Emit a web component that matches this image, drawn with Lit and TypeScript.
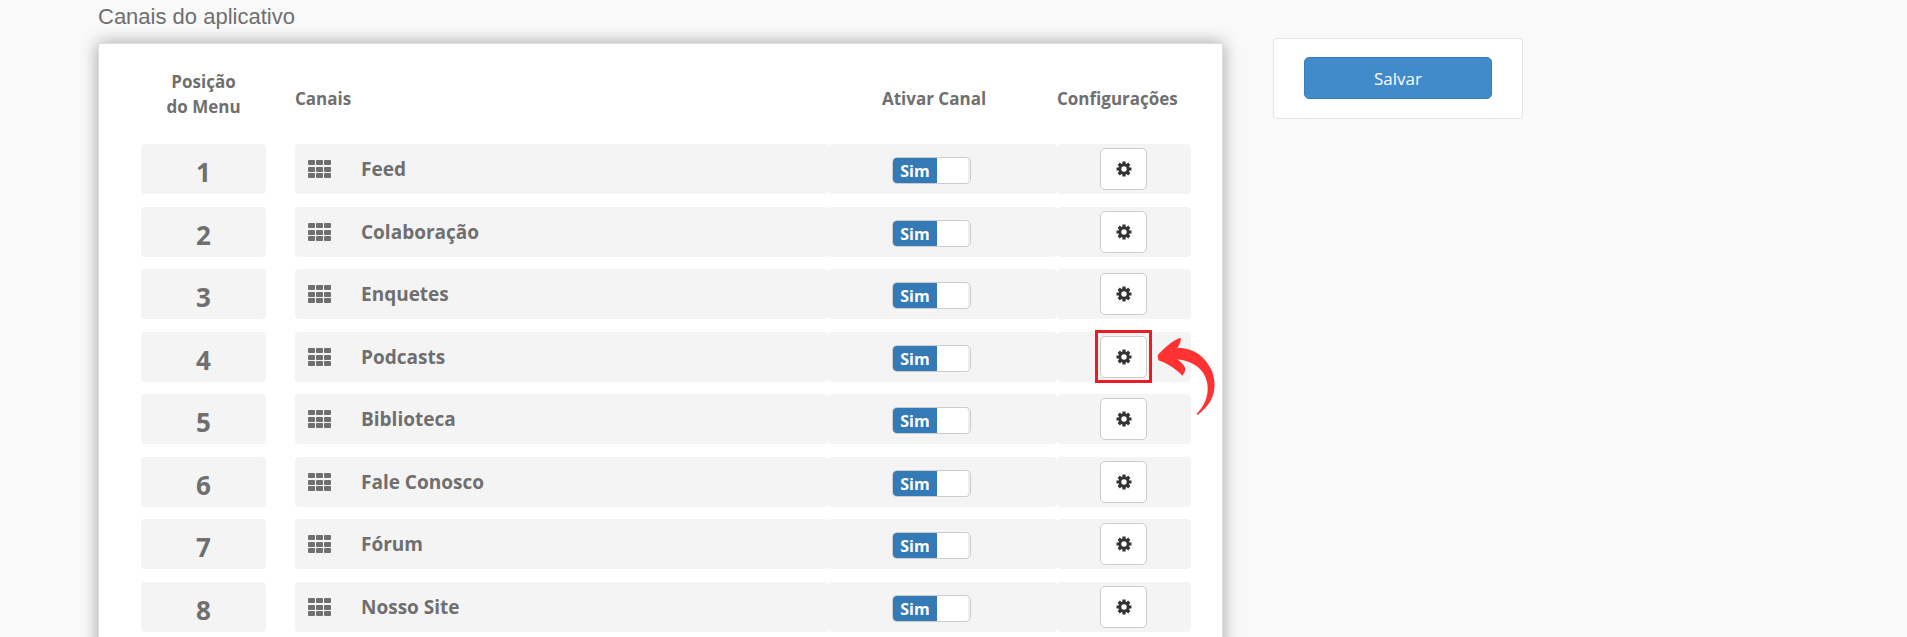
import { LitElement, html, css, svg, nothing } from "lit";
import { customElement, property, state } from "lit/decorators.js";

interface Channel {
  name: string;
  active: boolean;
}

const gridCells = [0, 8, 16].flatMap((x) =>
  [0, 7, 13].map((y) => svg`<rect x=${x} y=${y} width="7" height="5" rx="1"></rect>`)
);

@customElement("channel-switch")
export class ChannelSwitch extends LitElement {
  @property() name = "";
  @property({ type: Boolean }) checked = false;

  static styles = css`
    :host {
      display: block;
      width: 79px;
    }
    .switch {
      position: relative;
      display: flex;
      box-sizing: border-box;
      height: 27px;
      overflow: hidden;
      border: 1px solid #ccc;
      border-radius: 5px;
      background: #fff;
      cursor: pointer;
    }
    .input {
      position: absolute;
      inset: 0;
      width: 100%;
      height: 100%;
      margin: 0;
      opacity: 0;
      cursor: pointer;
    }
    .on {
      width: 44px;
      background: #337ab7;
      color: #fff;
      font-size: 16px;
      font-weight: 700;
      line-height: 26px;
      text-align: center;
    }
    .handle {
      width: 31px;
      border-right: 2px solid #eee;
      border-radius: 0 4px 4px 0;
    }
  `;

  render() {
    return html`
      <label class="switch">
        <input
          class="input"
          type="checkbox"
          aria-label="Ativar Canal ${this.name}"
          .checked=${this.checked}
          @change=${(e: Event) => (this.checked = (e.target as HTMLInputElement).checked)}
        />
        ${this.checked
          ? html`<span class="on">Sim</span><span class="handle"></span>`
          : html`<span class="handle"></span>`}
      </label>
    `;
  }
}

@customElement("app-root")
export class AppRoot extends LitElement {
  @state() private channels: Channel[] = [
    "Feed",
    "Colaboração",
    "Enquetes",
    "Podcasts",
    "Biblioteca",
    "Fale Conosco",
    "Fórum",
    "Nosso Site",
  ].map((name) => ({ name, active: true }));

  @state() private highlighted = "Podcasts";

  static styles = css`
    :host {
      display: block;
      min-height: 100vh;
      background: #f9f9f9;
      color: #6f6f6f;
      font-family: "Open Sans", sans-serif;
    }
    .page {
      display: grid;
      grid-template-columns: 9fr 2fr;
      gap: 50px;
      align-items: start;
      max-width: 1425px;
      margin-left: 98px;
    }
    .title {
      margin: 0;
      padding-top: 3px;
      height: 40px;
      font-family: "Liberation Sans", Arial, sans-serif;
      font-size: 22px;
      font-weight: 400;
      line-height: 28px;
    }
    .card {
      padding: 16px 31px 48px 42px;
      border: 1px solid #ddd;
      background: #fff;
      box-shadow: 0 0 16px rgba(0, 0, 0, 0.35);
    }
    .table {
      width: 100%;
      border-collapse: collapse;
      table-layout: fixed;
    }
    .col-position {
      width: 154px;
    }
    .col-active {
      width: 228px;
    }
    .col-config {
      width: 134px;
    }
    .head {
      box-sizing: border-box;
      height: 84px;
      padding: 26px 0 0;
      font-size: 17px;
      font-weight: 700;
      line-height: 25px;
      text-align: left;
      vertical-align: top;
    }
    .head-position {
      padding-top: 9px;
      padding-right: 29px;
      text-align: center;
    }
    .head-active {
      padding-left: 53px;
    }
    .cell {
      padding: 0 0 12px;
    }
    .row:nth-child(odd) .cell {
      padding-bottom: 13px;
    }
    .cell-position {
      padding-right: 29px;
    }
    .box {
      position: relative;
      display: flex;
      box-sizing: border-box;
      height: 50px;
      border-radius: 4px;
      background: #f4f4f4;
    }
    .box-position {
      justify-content: center;
      padding-top: 2px;
      font-size: 26px;
      font-weight: 700;
      line-height: 52px;
    }
    .box-channel {
      gap: 30px;
      padding-left: 13px;
      font-size: 19px;
      font-weight: 700;
      line-height: 50px;
    }
    .grid-icon {
      width: 23px;
      height: 18px;
      margin-top: 16px;
      fill: #6f6f6f;
    }
    .box-active {
      padding: 13px 0 0 63px;
    }
    .box-config {
      padding: 4px 0 0 43px;
    }
    .config {
      display: flex;
      align-items: center;
      justify-content: center;
      width: 47px;
      height: 42px;
      padding: 0;
      border: 1px solid #ccc;
      border-radius: 5px;
      background: #fff;
      cursor: pointer;
    }
    .gear {
      width: 16px;
      height: 16px;
      fill: #333;
    }
    .marker {
      position: absolute;
      top: -2px;
      left: 38px;
      box-sizing: border-box;
      width: 57px;
      height: 53px;
      border: 3px solid #ed1c24;
      pointer-events: none;
    }
    .arrow {
      position: absolute;
      z-index: 1;
      top: 5px;
      left: 100px;
      width: 58px;
      height: 80px;
      fill: #ff3131;
      pointer-events: none;
    }
    .side {
      margin-top: 38px;
      padding: 18px 30px 19px;
      border: 1px solid #e4e4e4;
      border-radius: 4px;
      background: #fff;
    }
    .save {
      width: 100%;
      height: 42px;
      border: 1px solid #357ebd;
      border-radius: 5px;
      background: #428bca;
      color: #fff;
      font-family: inherit;
      font-size: 17px;
      cursor: pointer;
    }
  `;

  private renderRow(channel: Channel, index: number) {
    return html`
      <tr class="row">
        <td class="cell cell-position"><div class="box box-position">${index + 1}</div></td>
        <td class="cell">
          <div class="box box-channel">
            <svg class="grid-icon" viewBox="0 0 23 18" aria-hidden="true">${gridCells}</svg>
            <span>${channel.name}</span>
          </div>
        </td>
        <td class="cell">
          <div class="box box-active">
            <channel-switch .name=${channel.name} ?checked=${channel.active}></channel-switch>
          </div>
        </td>
        <td class="cell">
          <div class="box box-config">
            <button class="config" type="button" aria-label="Configurar ${channel.name}">
              <svg class="gear" viewBox="0 0 16 16" aria-hidden="true">
                <path
                  fill-rule="evenodd"
                  d="M6.400 0.500h3.200v2.100l1 0.400 1.500-1.400 2.300 2.300-1.400 1.500 0.400 1h2.100v3.200h-2.100l-0.400 1 1.400 1.500-2.300 2.300-1.500-1.400-1 0.400v2.100H6.400v-2.100l-1-0.400-1.500 1.400-2.300-2.300 1.400-1.500-0.400-1H0.500V6.400h2.100l0.400-1-1.400-1.500 2.300-2.300 1.500 1.400 1-0.400zM8 5.300a2.700 2.700 0 1 0 0 5.400 2.700 2.700 0 0 0 0-5.400z"
                ></path>
              </svg>
            </button>
            ${channel.name === this.highlighted
              ? html`
                  <span class="marker"></span>
                  <svg class="arrow" viewBox="291 81 174 240" aria-hidden="true">
                    <path
                      d="M293 136 C313 114 334 94 359 84 C365 83 363 98 352 114 C400 112 439 142 456 184 C473 233 463 278 413 315 C409 314 411 310 415 306 C438 279 446 252 442 221 C436 181 402 153 352 148 C365 158 375 168 376 178 C375 186 371 192 367 197 C345 174 321 160 295 151 Z"
                    ></path>
                  </svg>
                `
              : nothing}
          </div>
        </td>
      </tr>
    `;
  }

  render() {
    return html`
      <div class="page">
        <main>
          <h1 class="title">Canais do aplicativo</h1>
          <section class="card">
            <table class="table">
              <colgroup>
                <col class="col-position" />
                <col />
                <col class="col-active" />
                <col class="col-config" />
              </colgroup>
              <thead>
                <tr>
                  <th class="head head-position" scope="col">Posição<br />do Menu</th>
                  <th class="head" scope="col">Canais</th>
                  <th class="head head-active" scope="col">Ativar Canal</th>
                  <th class="head" scope="col">Configurações</th>
                </tr>
              </thead>
              <tbody>
                ${this.channels.map((channel, index) => this.renderRow(channel, index))}
              </tbody>
            </table>
          </section>
        </main>
        <aside class="side">
          <button class="save" type="button">Salvar</button>
        </aside>
      </div>
    `;
  }
}
